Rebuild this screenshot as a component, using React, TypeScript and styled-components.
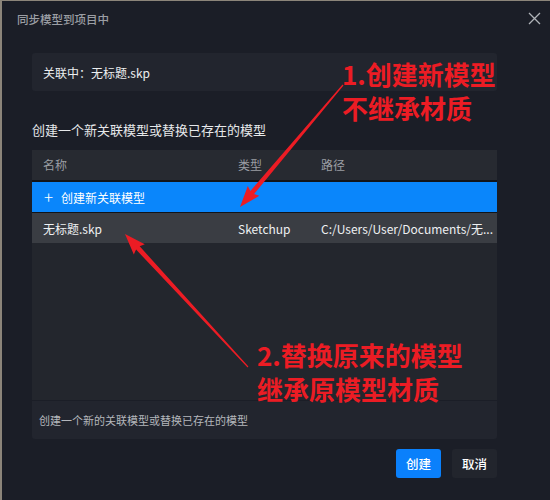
import styled, { createGlobalStyle } from 'styled-components';

const GlobalStyle = createGlobalStyle`
    html, body {
        margin: 0;
        padding: 0;
        background: #1b1e27;
    }
    * {
        box-sizing: border-box;
    }
`;

type Pt = [number, number];

// tapered arrow: thin tail, wide head
const arrowPoints = (tail: Pt, tip: Pt, headLen = 19, headHalf = 7.5, tailHalf = 0.6, neckHalf = 2.4) => {
    const dx = tip[0] - tail[0];
    const dy = tip[1] - tail[1];
    const len = Math.hypot(dx, dy);
    const ux = dx / len;
    const uy = dy / len;
    const nx = -uy;
    const ny = ux;
    const bx = tip[0] - ux * headLen;
    const by = tip[1] - uy * headLen;
    const pts: Pt[] = [
        [tail[0] + nx * tailHalf, tail[1] + ny * tailHalf],
        [bx + nx * neckHalf, by + ny * neckHalf],
        [bx + nx * headHalf - ux * 2, by + ny * headHalf - uy * 2],
        tip,
        [bx - nx * headHalf - ux * 2, by - ny * headHalf - uy * 2],
        [bx - nx * neckHalf, by - ny * neckHalf],
        [tail[0] - nx * tailHalf, tail[1] - ny * tailHalf],
    ];
    return pts.map((p) => `${p[0].toFixed(1)},${p[1].toFixed(1)}`).join(' ');
};

// path is shortened the way the app shows it
const rows = [{ name: '无标题.skp', type: 'Sketchup', path: 'C:/Users/User/Documents/无...' }];

const App = () => {
    return (
        <>
            <GlobalStyle />
            <Dialog>
                <Header>
                    <Title>同步模型到项目中</Title>
                    <CloseIcon width="13" height="13" viewBox="0 0 13 13">
                        <path d="M1 1 L12 12 M12 1 L1 12" stroke="#b0b3b8" strokeWidth="1.3" fill="none" />
                    </CloseIcon>
                </Header>

                <Body>
                    <InfoBox>关联中：无标题.skp</InfoBox>
                    <Heading>创建一个新关联模型或替换已存在的模型</Heading>

                    <Table>
                        <HeaderRow>
                            <Cell>名称</Cell>
                            <Cell>类型</Cell>
                            <Cell>路径</Cell>
                        </HeaderRow>
                        <CreateRow>
                            <Plus>+</Plus>
                            创建新关联模型
                        </CreateRow>
                        {rows.map((r) => (
                            <DataRow key={r.path}>
                                <Cell>{r.name}</Cell>
                                <Cell>{r.type}</Cell>
                                <Cell>{r.path}</Cell>
                            </DataRow>
                        ))}
                    </Table>

                    <HintBox>创建一个新的关联模型或替换已存在的模型</HintBox>

                    <Buttons>
                        <Button $primary>创建</Button>
                        <Button>取消</Button>
                    </Buttons>
                </Body>

                <Note $x={340} $y={56}>
                    1.创建新模型
                    <br />
                    不继承材质
                </Note>
                <Note $x={255} $y={337}>
                    2.替换原来的模型
                    <br />
                    继承原模型材质
                </Note>

                <Arrows width="550" height="500" viewBox="0 0 550 500">
                    <polygon points={arrowPoints([343, 85], [240, 207])} fill="#ec1c24" />
                    <polygon points={arrowPoints([248, 367], [125, 234])} fill="#ec1c24" />
                </Arrows>
            </Dialog>
        </>
    );
};

export default App;

const Dialog = styled.div`
    position: relative;
    width: 550px;
    height: 500px;
    background: #1b1e27;
    border-top: 1px solid #8c857a;
    border-left: 2px solid #8c857a;
    font-family: 'Noto Sans CJK SC', 'Noto Sans', sans-serif;
    overflow: hidden;
`;

const Header = styled.div`
    display: flex;
    align-items: center;
    justify-content: space-between;
    height: 35px;
    padding: 0 9px 0 15px;
`;

const Title = styled.div`
    color: #9b9ea4;
    font-size: 11.5px;
    font-weight: 500;
`;

const CloseIcon = styled.svg`
    display: block;
`;

const Body = styled.div`
    display: flex;
    flex-direction: column;
    padding: 0 53px 0 30px;
`;

const InfoBox = styled.div`
    display: flex;
    align-items: center;
    height: 38px;
    margin-top: 17px;
    padding-left: 11px;
    border-radius: 3px;
    background: #22252e;
    color: #eceef0;
    font-size: 12px;
`;

const Heading = styled.div`
    height: 20px;
    line-height: 20px;
    margin: 29px 0 10px;
    color: #e6e8ea;
    font-size: 13px;
`;

const Table = styled.div`
    display: flex;
    flex-direction: column;
    height: 250px;
    background: #23262d;
`;

const Row = styled.div`
    display: grid;
    grid-template-columns: 195px 83px 1fr;
    align-items: center;
    height: 30px;
    font-size: 12px;
`;

const HeaderRow = styled(Row)`
    height: 32px;
    padding-bottom: 2px;
    background: #272a31;
    border-bottom: 2px solid #121419;
    color: #9a9da3;
`;

const DataRow = styled(Row)`
    background: #3a3d43;
    color: #eef0f2;
`;

const Cell = styled.div`
    padding: 0 11px;
    white-space: nowrap;
`;

const CreateRow = styled.div`
    display: flex;
    align-items: center;
    gap: 8px;
    height: 31px;
    padding-left: 12px;
    background: #0a86fb;
    border-bottom: 1px solid #121419;
    color: #ffffff;
    font-size: 12px;
`;

const Plus = styled.span`
    font-size: 17px;
    font-weight: 200;
    line-height: 1;
    margin-top: -2px;
`;

const HintBox = styled.div`
    display: flex;
    align-items: center;
    height: 38px;
    margin-top: 1px;
    padding-left: 7px;
    border-radius: 0 0 3px 3px;
    background: #22252e;
    color: #b4b7bc;
    font-size: 11px;
`;

const Buttons = styled.div`
    display: flex;
    justify-content: flex-end;
    gap: 11px;
    margin-top: 10px;
`;

const Button = styled.button<{ $primary?: boolean }>`
    width: 45px;
    height: 29px;
    padding: 0;
    border: none;
    border-radius: 3px;
    background: ${(p) => (p.$primary ? '#0a80fb' : '#22252d')};
    color: #ffffff;
    font-family: inherit;
    font-size: 12.5px;
    font-weight: 500;
`;

const Note = styled.div<{ $x: number; $y: number }>`
    position: absolute;
    left: ${(p) => p.$x}px;
    top: ${(p) => p.$y}px;
    color: #ec1c24;
    font-size: 26px;
    font-weight: 700;
    line-height: 34px;
    white-space: nowrap;
`;

const Arrows = styled.svg`
    position: absolute;
    left: -2px;
    top: -1px;
    pointer-events: none;
`;
